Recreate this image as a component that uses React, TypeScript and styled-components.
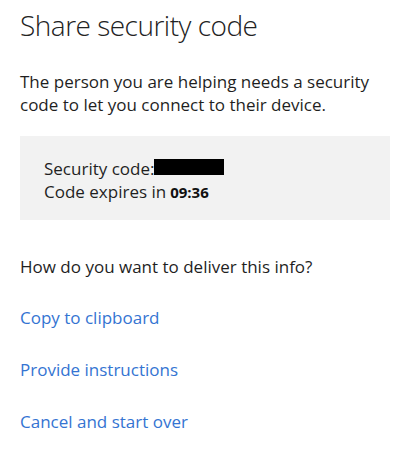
import React from "react";
import styled, {createGlobalStyle} from "styled-components";

const GlobalStyle = createGlobalStyle`
    html, body {
        margin: 0;
        padding: 0;
        background: #ffffff;
    }
    body {
        font-family: "Open Sans", "Noto Sans", "Liberation Sans", sans-serif;
        color: #1f1f1f;
    }
`

const Page = styled.div`
    width: 400px;
    height: 457px;
    box-sizing: border-box;
    padding: 8px 10px 0 20px;
    overflow: hidden;
`
const Title = styled.h1`
    margin: 0;
    font-size: 28px;
    line-height: 34px;
    font-weight: 300;
    color: #222;
    letter-spacing: -0.5px;
`
const Intro = styled.p`
    margin: 28px 0 0;
    font-size: 17px;
    line-height: 23px;
    color: #1f1f1f;
`
const CodeBox = styled.div`
    margin-top: 20px;
    background: #f2f2f2;
    padding: 21px 24px 16px;
    font-size: 17px;
    line-height: 23px;
`
const CodeLine = styled.div`
    white-space: nowrap;
`
const Redacted = styled.span`
    display: inline-block;
    width: 70px;
    height: 16px;
    background: #000;
    vertical-align: baseline;
`
const Timer = styled.b`
    font-size: 15px;
    font-weight: 700;
    margin-left: 4px;
    color: #111;
`
const Question = styled.p`
    margin: 35px 0 0;
    font-size: 17px;
    line-height: 23px;
`
const Actions = styled.div`
    display: flex;
    flex-direction: column;
    align-items: flex-start;
    gap: 29px;
    margin-top: 28px;
`
const Action = styled.a`
    font-size: 17px;
    line-height: 23px;
    color: #3474d2;
    text-decoration: none;
    cursor: pointer;
`

export default function App() {
    return (
        <Page>
            <GlobalStyle/>
            <Title>Share security code</Title>
            <Intro>The person you are helping needs a security code to let you connect to their device.</Intro>
            <CodeBox>
                <CodeLine>Security code:<Redacted/></CodeLine>
                <CodeLine>Code expires in<Timer>09:36</Timer></CodeLine>
            </CodeBox>
            <Question>How do you want to deliver this info?</Question>
            <Actions>
                <Action>Copy to clipboard</Action>
                <Action>Provide instructions</Action>
                <Action>Cancel and start over</Action>
            </Actions>
        </Page>
    );
}
